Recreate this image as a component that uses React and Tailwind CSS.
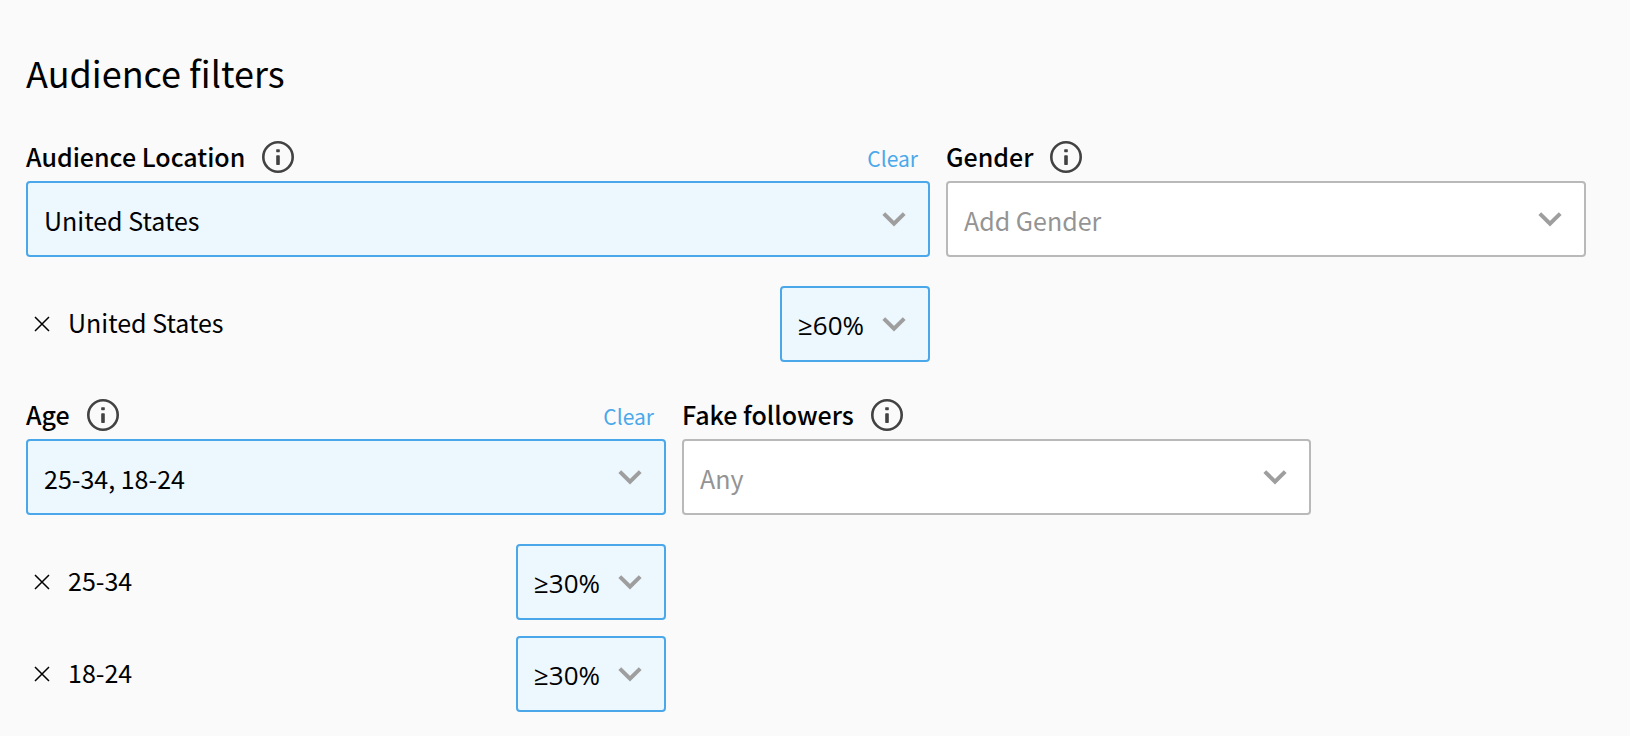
import React, { useState } from 'react';

const THRESHOLDS = ['≥10%', '≥20%', '≥30%', '≥40%', '≥50%', '≥60%', '≥70%', '≥80%', '≥90%'];

const InfoIcon = () => (
  <svg viewBox="0 0 32 32" className="size-8" fill="none" aria-hidden="true">
    <circle cx="16" cy="16" r="14.7" stroke="#424242" strokeWidth="2.6" />
    <rect x="14.2" y="8.2" width="3.6" height="3" rx="0.6" fill="#424242" />
    <rect x="14.2" y="14.2" width="3.6" height="9.8" rx="0.8" fill="#424242" />
  </svg>
);

const ChevronIcon = () => (
  <svg
    viewBox="0 0 24 16"
    className="pointer-events-none absolute top-1/2 right-6 h-4 w-6 -translate-y-1/2"
    fill="none"
    aria-hidden="true"
  >
    <path d="M1.8 2.6 12 12.6 22.2 2.6" stroke="#9e9e9e" strokeWidth="4" />
  </svg>
);

const CloseIcon = () => (
  <svg viewBox="0 0 16 16" className="size-4" fill="none" aria-hidden="true">
    <path d="M1 1 15 15M15 1 1 15" stroke="#000" strokeWidth="1.5" />
  </svg>
);

const SelectBox = ({ active, fontClass = 'text-[25px]', className = '', children, ...props }) => (
  <div className={`relative ${className}`}>
    <select
      className={`h-19 w-full appearance-none rounded border-2 pt-[2px] pr-12 pl-4 leading-9 ${fontClass} ${
        active
          ? 'border-[#4aa8ea] bg-[#ecf7fe] text-black'
          : 'border-[#b9b9b9] bg-white text-[#949494]'
      }`}
      {...props}
    >
      {children}
    </select>
    <ChevronIcon />
  </div>
);

const FilterField = ({ id, label, placeholder, options, value, onChange, onClear, children }) => (
  <div>
    <div className="mb-2 flex h-8 items-center">
      <label htmlFor={id} className="pb-[2px] text-[25px] leading-8 font-medium">
        {label}
      </label>
      <button type="button" className="ml-[17px]" aria-label={`About ${label}`}>
        <InfoIcon />
      </button>
      {onClear && (
        <button
          type="button"
          onClick={onClear}
          className="mr-3 ml-auto pt-[2px] text-[21px] leading-8 text-[#4aa8ea]"
        >
          Clear
        </button>
      )}
    </div>
    <SelectBox id={id} active={Boolean(value)} value={value} onChange={(e) => onChange(e.target.value)}>
      <option value="">{placeholder}</option>
      {value && !options.includes(value) && <option value={value}>{value}</option>}
      {options.map((option) => (
        <option key={option} value={option}>
          {option}
        </option>
      ))}
    </SelectBox>
    {children}
  </div>
);

const SelectedItems = ({ items, onChange }) => {
  const removeItem = (name) => onChange(items.filter((item) => item.name !== name));

  const setThreshold = (name, threshold) =>
    onChange(items.map((item) => (item.name === name ? { ...item, threshold } : item)));

  if (items.length === 0) return null;

  return (
    <ul className="mt-[29px] flex flex-col gap-4">
      {items.map((item) => (
        <li key={item.name} className="flex items-center">
          <button
            type="button"
            onClick={() => removeItem(item.name)}
            className="mr-[10px] flex size-8 items-center justify-center"
            aria-label={`Remove ${item.name}`}
          >
            <CloseIcon />
          </button>
          <span className="flex-1 pb-1 text-[25px] leading-9">{item.name}</span>
          {/* The CJK face has a full-width ≥, so the thresholds use a Latin one */}
          <SelectBox
            active
            className="w-[150px]"
            fontClass="font-['Open_Sans','Noto_Sans',sans-serif] text-[26px]"
            aria-label={`${item.name} threshold`}
            value={item.threshold}
            onChange={(e) => setThreshold(item.name, e.target.value)}
          >
            {THRESHOLDS.map((threshold) => (
              <option key={threshold}>{threshold}</option>
            ))}
          </SelectBox>
        </li>
      ))}
    </ul>
  );
};

// Adds the picked option to the list, unless it is there already
const addItem = (items, name) => {
  if (!name) return [];
  if (items.some((item) => item.name === name)) return items;
  return [...items, { name, threshold: '≥30%' }];
};

const App = () => {
  const [locations, setLocations] = useState([{ name: 'United States', threshold: '≥60%' }]);
  const [ages, setAges] = useState([
    { name: '25-34', threshold: '≥30%' },
    { name: '18-24', threshold: '≥30%' },
  ]);
  const [gender, setGender] = useState('');
  const [fakeFollowers, setFakeFollowers] = useState('');

  return (
    <main className="min-h-screen bg-[#fafafa] pt-11 pr-11 pb-6 pl-[26px] font-['Noto_Sans_CJK_SC','Noto_Sans',sans-serif] text-black">
      <h1 className="mb-[41px] text-[36px] leading-14">Audience filters</h1>

      <div className="grid gap-4 lg:grid-cols-[904fr_640fr]">
        <FilterField
          id="location"
          label="Audience Location"
          placeholder="Add Location"
          options={['United States', 'Canada', 'United Kingdom']}
          value={locations.map((item) => item.name).join(', ')}
          onChange={(name) => setLocations(addItem(locations, name))}
          onClear={() => setLocations([])}
        >
          <SelectedItems items={locations} onChange={setLocations} />
        </FilterField>
        <FilterField
          id="gender"
          label="Gender"
          placeholder="Add Gender"
          options={['Female', 'Male']}
          value={gender}
          onChange={setGender}
        />
      </div>

      <div className="mt-[37px] grid gap-4 lg:grid-cols-[640fr_629fr_259fr]">
        <FilterField
          id="age"
          label="Age"
          placeholder="Add Age"
          options={['13-17', '18-24', '25-34', '35-44', '45-64', '65+']}
          value={ages.map((item) => item.name).join(', ')}
          onChange={(name) => setAges(addItem(ages, name))}
          onClear={() => setAges([])}
        >
          <SelectedItems items={ages} onChange={setAges} />
        </FilterField>
        <FilterField
          id="fake-followers"
          label="Fake followers"
          placeholder="Any"
          options={['≤10%', '≤20%', '≤30%']}
          value={fakeFollowers}
          onChange={setFakeFollowers}
        />
      </div>
    </main>
  );
};

export default App;
